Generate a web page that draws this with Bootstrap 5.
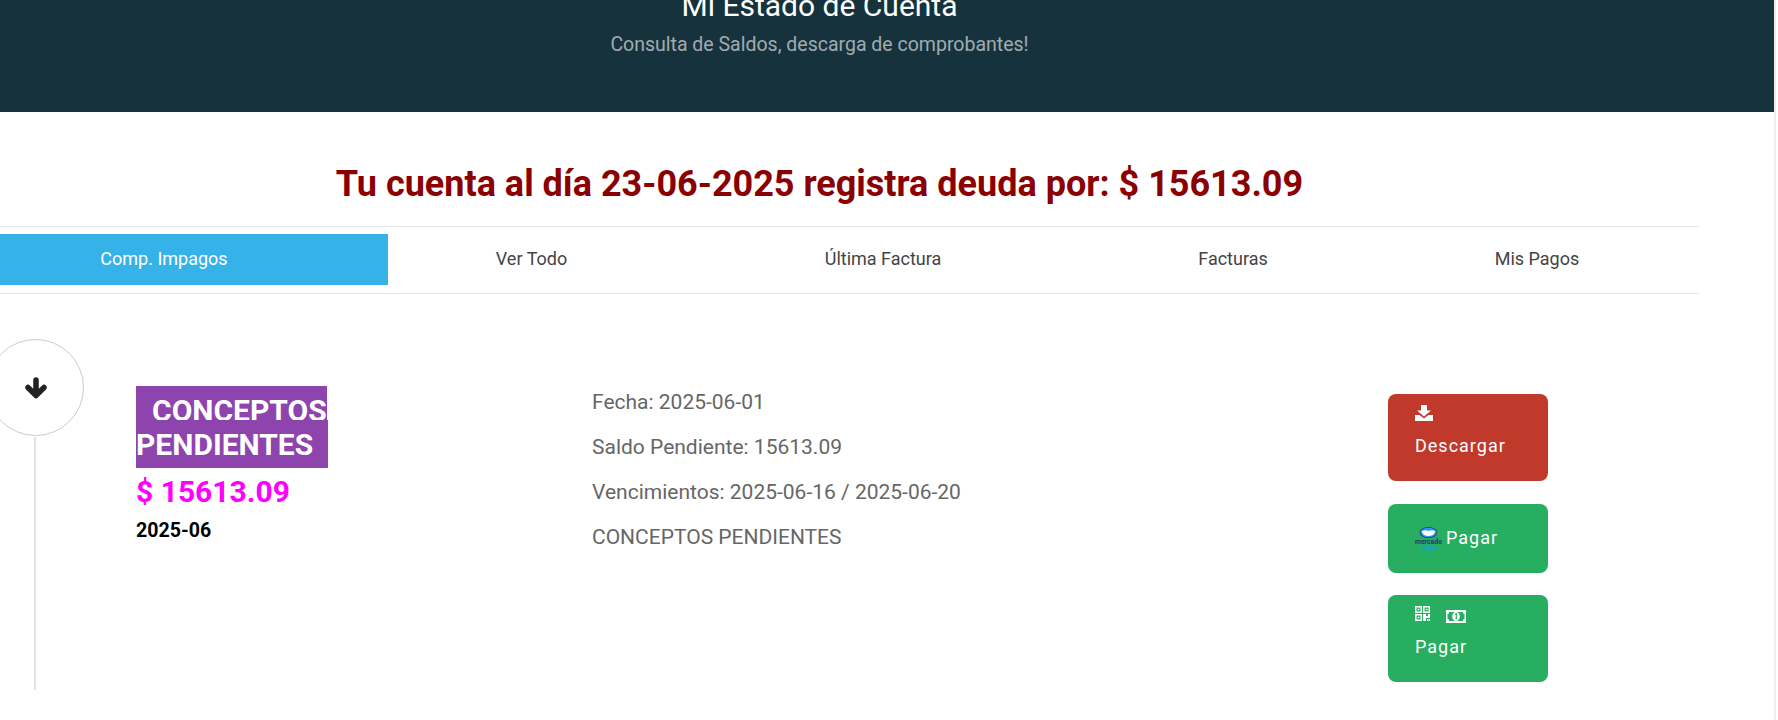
<!DOCTYPE html>
<html lang="es">
<head>
  <meta charset="UTF-8" />
  <title>Mi Estado de Cuenta</title>
  <meta name="viewport" content="width=device-width, initial-scale=1" />
  <link href="https://cdn.jsdelivr.net/npm/bootstrap@5.3.3/dist/css/bootstrap.min.css" rel="stylesheet" />
  <style>
    html, body {
      height: 720px;
      overflow: hidden;
    }
    body {
      font-family: Roboto, "Liberation Sans", sans-serif;
      background: #fff;
    }
    .page-scroll {
      width: 1776px;
      height: 720px;
      border-right: 2px solid #eeeeee;
      overflow: hidden;
    }
    .hero {
      background: #16323d;
      height: 112px;
      overflow: hidden;
      text-align: center;
    }
    .hero h1 {
      color: #fff;
      font-size: 30px;
      font-weight: 400;
      line-height: 36px;
      margin: -12px 0 8px;
    }
    .hero p {
      color: rgba(255, 255, 255, .6);
      font-size: 19.5px;
      line-height: 26px;
      margin: 0;
    }
    .sheet {
      width: 1759px;
      margin-left: -60px;
    }
    .debt-title {
      color: #8b0000;
      font-size: 36px;
      font-weight: 700;
      line-height: 44px;
      text-align: center;
      margin: 50px 0 20px;
    }
    .tabs-bar {
      display: grid;
      grid-template-columns: 448px 287px 416px 284px 324px;
      border-top: 1px solid #e6e6e6;
      border-bottom: 1px solid #e6e6e6;
      padding: 7px 0 8px;
    }
    .tabs-bar a {
      color: #444;
      font-size: 18px;
      line-height: 50px;
      padding-bottom: 1px;
      text-align: center;
      text-decoration: none;
    }
    .tabs-bar a.active {
      background: #35b3e8;
      color: #fff;
    }
    .entry {
      position: relative;
      display: flex;
      height: 396px;
      padding-left: 196px;
    }
    .entry-line {
      position: absolute;
      left: 94px;
      top: 143px;
      width: 2px;
      height: 253px;
      background: #e2e2e2;
    }
    .entry-dot {
      position: absolute;
      left: 47px;
      top: 45px;
      width: 97px;
      height: 97px;
      border: 1px solid #ccc;
      border-radius: 50%;
      background: #fff;
    }
    .entry-main {
      width: 456px;
      padding-top: 100px;
    }
    .concept-tag {
      background: #8e44ad;
      color: #fff;
      font-size: 30px;
      font-weight: 700;
      line-height: 33px;
      padding: 7px 15px 6px 16px;
    }
    .concept-title {
      margin: 0;
      line-height: 33px;
    }
    .concept-amount {
      color: #f0f;
      font-size: 30px;
      font-weight: 700;
      line-height: 38px;
      margin: 11px 0 0;
    }
    .concept-period {
      color: #000;
      font-size: 19.6px;
      font-weight: 700;
      line-height: 24px;
      margin: 8px 0 0;
    }
    .entry-detail {
      width: 796px;
      padding-top: 96px;
    }
    .entry-detail p {
      color: #666;
      font-size: 21px;
      line-height: 25px;
      margin: 0 0 20px;
    }
    .entry-actions {
      padding-top: 100px;
    }
    .pay-btn {
      display: block;
      width: 160px;
      color: #fff;
      font-size: 18px;
      letter-spacing: 1px;
      line-height: 24px;
      text-align: left;
      border: 0;
      border-radius: 8px;
      padding: 11px 27px 0;
      margin-bottom: 22px;
    }
    .pay-btn:hover {
      color: #fff;
    }
    .btn-download {
      background: #c0392b;
      height: 87px;
      margin-bottom: 23px;
    }
    .btn-mp {
      background: #27ae60;
      height: 69px;
      padding-top: 22px;
    }
    .btn-mp svg {
      margin-top: 1px;
    }
    .btn-qr {
      background: #27ae60;
      height: 87px;
      margin-bottom: 0;
    }
    .btn-icons {
      height: 18px;
      margin-bottom: 11px;
    }
  </style>
</head>
<body>
  <div class="page-scroll">
    <header class="hero">
      <div class="sheet">
        <h1>Mi Estado de Cuenta</h1>
        <p>Consulta de Saldos, descarga de comprobantes!</p>
      </div>
    </header>

    <div class="sheet">
      <h2 class="debt-title">Tu cuenta al día 23-06-2025 registra deuda por: $ 15613.09</h2>

      <nav class="tabs-bar">
        <a class="active" href="#">Comp. Impagos</a>
        <a href="#">Ver Todo</a>
        <a href="#">Última Factura</a>
        <a href="#">Facturas</a>
        <a href="#">Mis Pagos</a>
      </nav>

      <div class="entry">
        <div class="entry-line"></div>
        <div class="entry-dot d-flex align-items-center justify-content-center">
          <svg width="24" height="24" viewBox="0 0 24 24">
            <path d="M12 4 V18 M4 11.5 L12 19.5 L20 11.5" fill="none" stroke="#222" stroke-width="5.5" stroke-linecap="round" stroke-linejoin="round" />
          </svg>
        </div>

        <div class="entry-main">
          <h3 class="concept-title"><span class="concept-tag">CONCEPTOS<br>PENDIENTES</span></h3>
          <p class="concept-amount">$ 15613.09</p>
          <p class="concept-period">2025-06</p>
        </div>

        <div class="entry-detail">
          <p>Fecha: 2025-06-01</p>
          <p>Saldo Pendiente: 15613.09</p>
          <p>Vencimientos: 2025-06-16 / 2025-06-20</p>
          <p>CONCEPTOS PENDIENTES</p>
        </div>

        <div class="entry-actions">
          <a class="btn pay-btn btn-download" href="#">
            <div class="btn-icons d-flex">
              <svg width="18" height="16" viewBox="0 0 18 16">
                <path d="M6 0 H12 V5.5 H16 L9 11.5 L2 5.5 H6 Z M0 10 H4.5 L9 13.5 L13.5 10 H18 V16 H0 Z" fill="#fff" />
              </svg>
            </div>
            Descargar
          </a>
          <a class="btn pay-btn btn-mp d-flex align-items-start gap-1" href="#">
            <svg class="flex-shrink-0" width="27" height="26" viewBox="0 0 27 26">
              <ellipse cx="13.5" cy="5.5" rx="8.8" ry="5.5" fill="#2d3277" />
              <ellipse cx="13.5" cy="5.5" rx="8" ry="4.8" fill="#1f9be8" />
              <path d="M6.5 4.5 Q10 2.5 13.5 4 Q17 2.5 20.5 4.5 L18 8 Q13.5 10 9 8 Z" fill="#fff" />
              <text x="13.5" y="17" font-family="Roboto, sans-serif" font-size="8" font-weight="700" letter-spacing="0" textLength="27" lengthAdjust="spacingAndGlyphs" text-anchor="middle" fill="#2d3277">mercado</text>
              <text x="13.5" y="22.5" font-family="Roboto, sans-serif" font-size="7" font-weight="700" letter-spacing="0" textLength="15" lengthAdjust="spacingAndGlyphs" text-anchor="middle" fill="#0aa5e0">pago</text>
            </svg>
            Pagar
          </a>
          <a class="btn pay-btn btn-qr" href="#">
            <div class="btn-icons d-flex gap-3 align-items-start">
              <svg width="15" height="15" viewBox="0 0 15 15">
                <path fill="#fff" fill-rule="evenodd" d="M0 0H7V7H0Z M1.5 1.5V5.5H5.5V1.5Z M8 0H15V7H8Z M9.5 1.5V5.5H13.5V1.5Z M0 8H7V15H0Z M1.5 9.5V13.5H5.5V9.5Z M2.7 2.7H4.3V4.3H2.7Z M10.7 2.7H12.3V4.3H10.7Z M2.7 10.7H4.3V12.3H2.7Z M8 8H11V10H13V8H15V12H11V15H8Z M12 13H13.5V15H12Z M14 13H15V15H14Z" />
              </svg>
              <svg width="20" height="13" viewBox="0 0 20 13" class="mt-1">
                <path fill="#fff" fill-rule="evenodd" d="M0 0H20V13H0Z M3 2C3 3.5 2.5 4 1.5 4V9C2.5 9 3 9.5 3 11H17C17 9.5 17.5 9 18.5 9V4C17.5 4 17 3.5 17 2Z" />
                <ellipse cx="10" cy="6.5" rx="3.8" ry="4.5" fill="#fff" />
                <path d="M9 4.5L10.3 3.8V9.2" fill="none" stroke="#27ae60" stroke-width="1.2" />
              </svg>
            </div>
            Pagar
          </a>
        </div>
      </div>
    </div>
  </div>
  <script src="https://cdn.jsdelivr.net/npm/bootstrap@5.3.3/dist/js/bootstrap.bundle.min.js"></script>
</body>
</html>
